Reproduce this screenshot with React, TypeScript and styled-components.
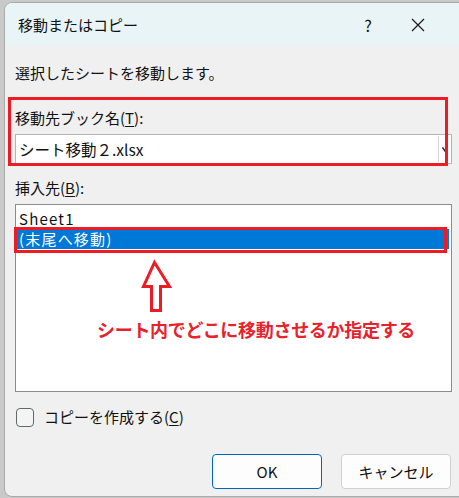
import React from "react";
import styled, { createGlobalStyle } from "styled-components";

const GlobalStyle = createGlobalStyle`
  html, body {
    margin: 0;
    padding: 0;
    background: #c9c9c9;
    overflow: hidden;
  }
  body {
    font-family: "Noto Sans CJK JP", "Noto Sans", sans-serif;
    color: #111;
  }
`;

const Dialog = styled.div`
  position: relative;
  margin: 2px 0 0 4px;
  width: 470px;
  height: 495px;
  background: #f0f0f0;
  border: 1px solid #a9a9a9;
  border-radius: 8px;
  overflow: hidden;
  box-sizing: border-box;
`;

const TitleBar = styled.div`
  display: flex;
  align-items: center;
  height: 43px;
  padding-left: 13px;
  background: #e8f4f6;
  font-size: 15px;
`;

const Title = styled.div`
  flex: 1;
  line-height: 20px;
`;

const TitleButton = styled.div<{ w: number }>`
  width: ${({ w }) => w}px;
  display: flex;
  justify-content: center;
  align-items: center;
  font-size: 16px;
`;

const Body = styled.div`
  display: flex;
  flex-direction: column;
  width: 437px;
  padding-left: 10px;
`;

const Text = styled.div<{ mt: number }>`
  margin-top: ${({ mt }) => mt}px;
  font-size: 15px;
  line-height: 20px;
  white-space: nowrap;
`;

const Key = styled.span`
  text-decoration: underline;
  text-underline-offset: 2px;
`;

const Highlight = styled.div<{ mt: number }>`
  position: relative;
  margin-top: ${({ mt }) => mt}px;
  &::after {
    content: "";
    position: absolute;
    left: -7px;
    top: -11px;
    right: 4px;
    bottom: -2px;
    border: 3px solid #ed1c24;
  }
`;

const Combo = styled.div`
  display: flex;
  align-items: center;
  margin-top: 6px;
  height: 30px;
  background: #fff;
  border: 1px solid #b4b4b4;
  box-sizing: border-box;
  font-size: 15.5px;
  padding-left: 3px;
`;

const ComboText = styled.div`
  flex: 1;
  line-height: 20px;
`;

const ComboArrow = styled.div`
  width: 12px;
  height: 26px;
  border-left: 1px solid #d6d6d6;
  display: flex;
  align-items: center;
  justify-content: center;
`;

const ListBox = styled.div`
  position: relative;
  margin-top: 6px;
  height: 188px;
  background: #fff;
  border: 1px solid #8c8c8c;
  box-sizing: border-box;
  padding: 4px 2px 0 0;
`;

const ListItem = styled.div<{ selected?: boolean }>`
  height: 20px;
  line-height: 20px;
  padding-left: 3px;
  font-size: 15px;
  letter-spacing: 1.2px;
  background: ${({ selected }) => (selected ? "#0078d7" : "transparent")};
  color: ${({ selected }) => (selected ? "#fff" : "#111")};
  white-space: nowrap;
`;

const RowMark = styled.div`
  position: absolute;
  left: -2px;
  top: 22px;
  width: 433px;
  height: 26px;
  border: 3px solid #ed1c24;
  box-sizing: border-box;
`;

const ArrowMark = styled.svg`
  position: absolute;
  left: 123px;
  top: 52px;
`;

const Note = styled.div`
  position: absolute;
  left: 81px;
  top: 112px;
  color: #e8222b;
  font-size: 18px;
  font-weight: 700;
  line-height: 24px;
  white-space: nowrap;
  letter-spacing: -0.3px;
`;

const CheckRow = styled.label`
  display: flex;
  align-items: center;
  margin-top: 15px;
  gap: 10px;
  font-size: 15px;
  line-height: 20px;
`;

const CheckBox = styled.span`
  width: 18px;
  height: 19px;
  margin-left: 1px;
  border: 1px solid #5e6a64;
  border-radius: 4px;
  background: #f4f4f4;
  box-sizing: border-box;
`;

const Buttons = styled.div`
  display: flex;
  justify-content: flex-end;
  gap: 19px;
  margin-top: 27px;
  padding-right: 1px;
`;

const Button = styled.button<{ primary?: boolean }>`
  width: 110px;
  height: 35px;
  border-radius: 4px;
  background: #fdfdfd;
  border: 1px solid ${({ primary }) => (primary ? "#0067c0" : "#d0d0d0")};
  font-family: "Noto Sans CJK JP", "Noto Sans", sans-serif;
  font-size: 15px;
  color: #111;
  padding: 0;
`;

export default function App() {
  return (
    <>
      <GlobalStyle />
      <Dialog>
        <TitleBar>
          <Title>移動またはコピー</Title>
          <TitleButton w={30}>?</TitleButton>
          <TitleButton w={70}>
            <svg width="14" height="14" viewBox="0 0 14 14">
              <path d="M1 1L13 13M13 1L1 13" stroke="#1a1a1a" strokeWidth="1.2" />
            </svg>
          </TitleButton>
          <TitleButton w={20} />
        </TitleBar>
        <Body>
          <Text mt={17}>選択したシートを移動します。</Text>
          <Highlight mt={25}>
            <Text mt={0}>
              移動先ブック名(<Key>T</Key>):
            </Text>
            <Combo>
              <ComboText>シート移動２.xlsx</ComboText>
              <ComboArrow>
                <svg width="6" height="5" viewBox="0 0 6 5">
                  <path d="M0.5 0.5L3 4L5.5 0.5" stroke="#222" strokeWidth="1.4" fill="none" />
                </svg>
              </ComboArrow>
            </Combo>
          </Highlight>
          <Text mt={14}>
            挿入先(<Key>B</Key>):
          </Text>
          <ListBox>
            <ListItem>Sheet1</ListItem>
            <ListItem selected>(末尾へ移動)</ListItem>
            <RowMark />
            <ArrowMark width="34" height="58" viewBox="0 0 34 58">
              <path
                d="M15.5 5.5L30.5 29.5H21.5V53.5H12.5V29.5H4.5Z"
                fill="none"
                stroke="#ed1c24"
                strokeWidth="3"
                strokeLinejoin="miter"
              />
            </ArrowMark>
            <Note>シート内でどこに移動させるか指定する</Note>
          </ListBox>
          <CheckRow>
            <CheckBox />
            <span>
              コピーを作成する(<Key>C</Key>)
            </span>
          </CheckRow>
          <Buttons>
            <Button primary>OK</Button>
            <Button>キャンセル</Button>
          </Buttons>
        </Body>
      </Dialog>
    </>
  );
}
